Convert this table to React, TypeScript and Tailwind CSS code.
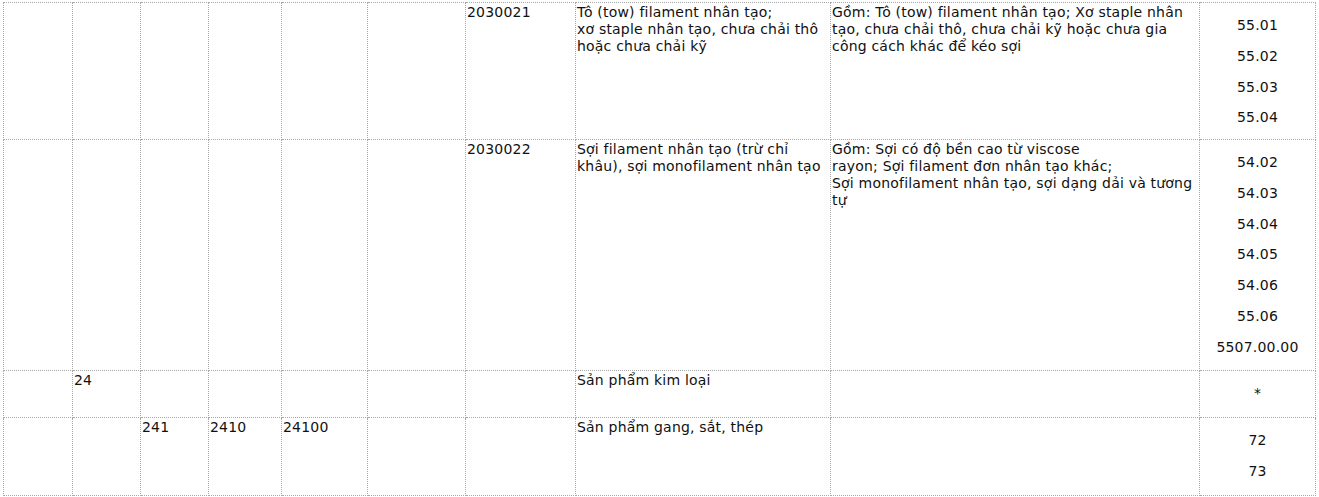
const cellBase =
  'border border-dotted border-[#a8a8a8] align-top p-[1px] text-[14px] tracking-[0.2px] leading-[17px] text-[#111]'

type Row = {
  cells: (React.ReactNode | null)[]
  codes: string[]
  h: string
}

function Lines({ lines }: { lines: string[] }) {
  return (
    <div className="whitespace-nowrap">
      {lines.map((l, i) => (
        <div key={i}>{l}</div>
      ))}
    </div>
  )
}

const rows: Row[] = [
  {
    cells: [
      null,
      null,
      null,
      null,
      null,
      null,
      '2030021',
      <Lines
        lines={[
          'Tô (tow) filament nhân tạo;',
          'xơ staple nhân tạo, chưa chải thô',
          'hoặc chưa chải kỹ',
        ]}
      />,
      <Lines
        lines={[
          'Gồm: Tô (tow) filament nhân tạo; Xơ staple nhân',
          'tạo, chưa chải thô, chưa chải kỹ hoặc chưa gia',
          'công cách khác để kéo sợi',
        ]}
      />,
    ],
    codes: ['55.01', '55.02', '55.03', '55.04'],
    h: 'h-[137px]',
  },
  {
    cells: [
      null,
      null,
      null,
      null,
      null,
      null,
      '2030022',
      <Lines lines={['Sợi filament nhân tạo (trừ chỉ', 'khâu), sợi monofilament nhân tạo']} />,
      <Lines
        lines={[
          'Gồm: Sợi có độ bền cao từ viscose',
          'rayon; Sợi filament đơn nhân tạo khác;',
          'Sợi monofilament nhân tạo, sợi dạng dải và tương',
          'tự',
        ]}
      />,
    ],
    codes: ['54.02', '54.03', '54.04', '54.05', '54.06', '55.06', '5507.00.00'],
    h: 'h-[231px]',
  },
  {
    cells: [null, '24', null, null, null, null, null, 'Sản phẩm kim loại', null],
    codes: ['*'],
    h: 'h-[47px]',
  },
  {
    cells: [null, null, '241', '2410', '24100', null, null, 'Sản phẩm gang, sắt, thép', null],
    codes: ['72', '73'],
    h: 'h-[78px]',
  },
]

const widths = [69, 68, 68, 73, 86, 98, 110, 255, 369, 116]

export default function App() {
  return (
    <div className="h-[497px] w-[1319px] overflow-hidden bg-white font-['DejaVu_Sans',Verdana,sans-serif]">
      <table className="ml-[3px] mt-[2px] table-fixed border-collapse w-[1313px]">
        <colgroup>
          {widths.map((w, i) => (
            <col key={i} style={{ width: w }} />
          ))}
        </colgroup>
        <tbody>
          {rows.map((row, ri) => (
            <tr key={ri} className={row.h}>
              {row.cells.map((c, ci) => (
                <td key={ci} className={cellBase}>
                  {c}
                </td>
              ))}
              <td className={cellBase}>
                <div className="flex flex-col items-center gap-[13.8px] pt-[13px] pb-[8px]">
                  {row.codes.map((code) => (
                    <span key={code}>{code}</span>
                  ))}
                </div>
              </td>
            </tr>
          ))}
        </tbody>
      </table>
    </div>
  )
}
